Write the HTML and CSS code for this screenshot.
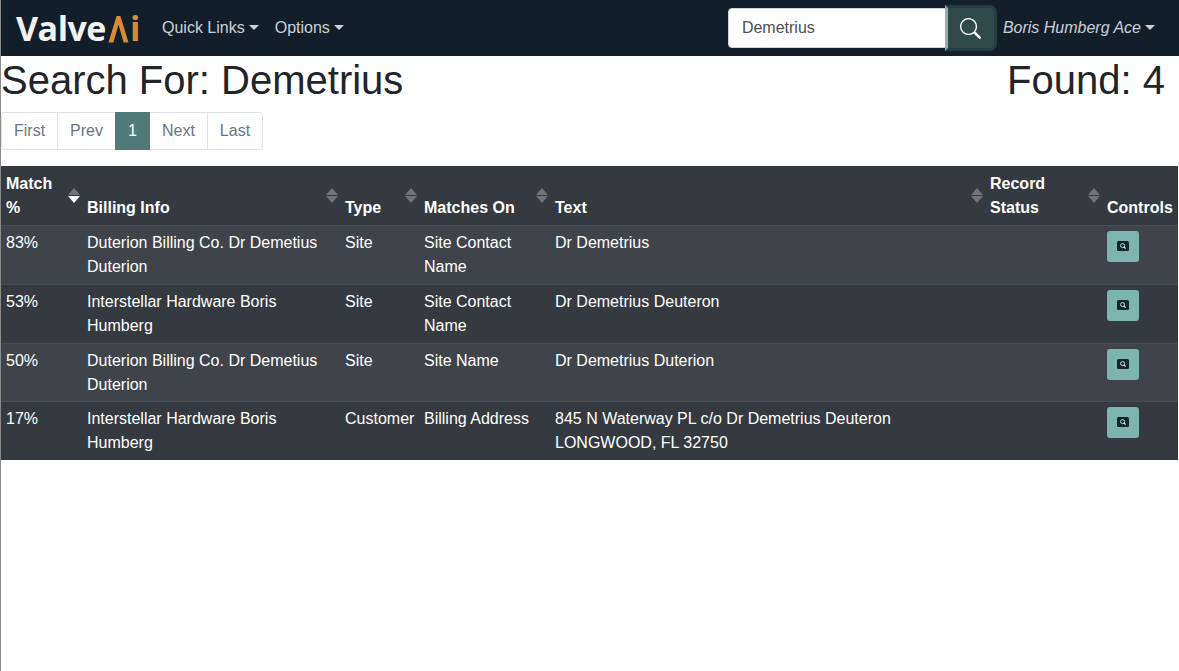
FILE: index.html
```html
<!DOCTYPE html>
<html lang="en">
<head>
<meta charset="utf-8">
<title>Search</title>
<link rel="stylesheet" href="styles.css">
</head>
<body>
<nav class="navbar">
  <a class="brand"><span>Valve</span><svg class="brand-a" viewBox="0 0 21 28" width="21" height="28"><path d="M0.5 27.5 L8.6 1 H12.4 L20.5 27.5 H15.6 L10.5 9.5 L5.4 27.5 Z" fill="#d98b35"/></svg><span class="brand-i">i</span></a>
  <a class="nav-link caret">Quick Links</a>
  <a class="nav-link caret">Options</a>
  <form class="search">
    <input class="search-input" type="text" value="Demetrius">
    <button class="search-btn" type="button" aria-label="Search">
      <svg viewBox="0 0 16 16" width="21" height="21" fill="#fff"><path d="M11.742 10.344a6.5 6.5 0 1 0-1.397 1.398h-.001c.03.04.062.078.098.115l3.85 3.85a1 1 0 0 0 1.415-1.414l-3.85-3.85a1.007 1.007 0 0 0-.115-.1zM12 6.5a5.5 5.5 0 1 1-11 0 5.5 5.5 0 0 1 11 0z"/></svg>
    </button>
  </form>
  <a class="nav-link caret user">Boris Humberg Ace</a>
</nav>
<main class="content">
  <div class="title-row">
    <h1>Search For: Demetrius</h1>
    <h1 class="found">Found: 4</h1>
  </div>
  <ul class="pagination">
    <li>First</li>
    <li>Prev</li>
    <li class="active">1</li>
    <li>Next</li>
    <li>Last</li>
  </ul>
  <table class="results">
    <colgroup>
      <col class="c1"><col class="c2"><col class="c3"><col class="c4"><col class="c5"><col class="c6"><col class="c7">
    </colgroup>
    <thead>
      <tr>
        <th class="sort desc">Match %</th>
        <th class="sort">Billing Info</th>
        <th class="sort">Type</th>
        <th class="sort">Matches On</th>
        <th class="sort">Text</th>
        <th class="sort">Record Status</th>
        <th>Controls</th>
      </tr>
    </thead>
    <tbody>
      <tr>
        <td>83%</td><td>Duterion Billing Co. Dr Demetius Duterion</td><td>Site</td><td>Site Contact Name</td><td>Dr Demetrius</td><td></td>
        <td><button class="view" type="button" aria-label="View"><svg viewBox="0 0 12 10" width="12" height="10"><rect width="12" height="10" rx="1.5" fill="#10262b"/><circle cx="5.6" cy="4.6" r="2" fill="none" stroke="#cfe5e2" stroke-width="1"/><path d="M7 6 L8.6 7.6" stroke="#cfe5e2" stroke-width="1.1"/></svg></button></td>
      </tr>
      <tr>
        <td>53%</td><td>Interstellar Hardware Boris Humberg</td><td>Site</td><td>Site Contact Name</td><td>Dr Demetrius Deuteron</td><td></td>
        <td><button class="view" type="button" aria-label="View"><svg viewBox="0 0 12 10" width="12" height="10"><rect width="12" height="10" rx="1.5" fill="#10262b"/><circle cx="5.6" cy="4.6" r="2" fill="none" stroke="#cfe5e2" stroke-width="1"/><path d="M7 6 L8.6 7.6" stroke="#cfe5e2" stroke-width="1.1"/></svg></button></td>
      </tr>
      <tr class="short">
        <td>50%</td><td>Duterion Billing Co. Dr Demetius Duterion</td><td>Site</td><td>Site Name</td><td>Dr Demetrius Duterion</td><td></td>
        <td><button class="view" type="button" aria-label="View"><svg viewBox="0 0 12 10" width="12" height="10"><rect width="12" height="10" rx="1.5" fill="#10262b"/><circle cx="5.6" cy="4.6" r="2" fill="none" stroke="#cfe5e2" stroke-width="1"/><path d="M7 6 L8.6 7.6" stroke="#cfe5e2" stroke-width="1.1"/></svg></button></td>
      </tr>
      <tr>
        <td>17%</td><td>Interstellar Hardware Boris Humberg</td><td>Customer</td><td>Billing Address</td><td>845 N Waterway PL c/o Dr Demetrius Deuteron<br>LONGWOOD, FL 32750</td><td></td>
        <td><button class="view" type="button" aria-label="View"><svg viewBox="0 0 12 10" width="12" height="10"><rect width="12" height="10" rx="1.5" fill="#10262b"/><circle cx="5.6" cy="4.6" r="2" fill="none" stroke="#cfe5e2" stroke-width="1"/><path d="M7 6 L8.6 7.6" stroke="#cfe5e2" stroke-width="1.1"/></svg></button></td>
      </tr>
    </tbody>
  </table>
</main>
</body>
</html>
```
FILE: styles.css
```css
* { box-sizing: border-box; }
html, body { margin: 0; padding: 0; }
body {
  font-family: "Liberation Sans", Arial, sans-serif;
  font-size: 16px;
  line-height: 24px;
  color: #212529;
  background: #fff;
  border-left: 1px solid #8a8a8a;
  min-height: 671px;
}
.navbar {
  display: flex;
  align-items: center;
  height: 56px;
  background: #131e2b;
  padding: 0 16px 0 15px;
}
.brand {
  display: flex;
  align-items: center;
  width: 138px;
  font-family: "Open Sans", sans-serif;
  font-weight: 700;
  font-size: 34px;
  line-height: 40px;
  letter-spacing: -0.5px;
  color: #f2f2f2;
}
.brand-a { margin: 2px 0 0 2px; flex: none; }
.brand-i { color: #d98b35; margin-left: 1px; }
.nav-link { color: rgba(255,255,255,.8); padding: 0 8px; white-space: nowrap; }
.caret::after {
  content: "";
  display: inline-block;
  margin-left: 4px;
  vertical-align: 3px;
  border-top: 5px solid;
  border-left: 5px solid transparent;
  border-right: 5px solid transparent;
}
.search { display: flex; align-items: center; margin-left: auto; }
.search-input {
  width: 218px;
  height: 40px;
  border: 1px solid #ced4da;
  border-radius: 4px 0 0 4px;
  padding: 0 13px;
  font: 16px "Liberation Sans", Arial, sans-serif;
  color: #495057;
}
.search-btn {
  display: flex;
  align-items: center;
  justify-content: center;
  width: 52px;
  height: 46px;
  margin-left: -1px;
  padding: 0;
  background: #2f4a48;
  border: 3px solid #263c3e;
  border-left-color: #8fb0ab;
  border-radius: 0 7px 7px 0;
}
.user { font-style: italic; margin-left: -2px; }
.title-row { display: flex; justify-content: space-between; padding-right: 14px; }
h1 { margin: 0 0 8px; font-size: 40px; line-height: 48px; font-weight: 400; }
.pagination {
  display: flex;
  list-style: none;
  margin: 0 0 16px;
  padding: 0;
}
.pagination li {
  padding: 6px 12px;
  height: 38px;
  color: #6c757d;
  background: #fff;
  border: 1px solid #dee2e6;
  margin-left: -1px;
}
.pagination li:first-child { margin-left: 0; border-radius: 4px 0 0 4px; }
.pagination li:last-child { border-radius: 0 4px 4px 0; }
.pagination .active { background: #4f7a78; border-color: #4f7a78; color: #fff; position: relative; z-index: 1; }
.results {
  width: 1177px;
  table-layout: fixed;
  border-collapse: collapse;
  color: #fff;
  background: #343a40;
}
.c1 { width: 81px; } .c2 { width: 258px; } .c3 { width: 79px; } .c4 { width: 131px; }
.c5 { width: 435px; } .c6 { width: 117px; } .c7 { width: 76px; }
th, td { padding: 5px; text-align: left; vertical-align: top; border-top: 1px solid #454d55; }
th { vertical-align: bottom; font-weight: 700; border-top: 0; border-bottom: 1px solid #454d55; position: relative; height: 59px; }
tbody td { height: 59px; }
tbody .short td { height: 58px; padding-bottom: 4px; }
tbody tr:nth-child(odd) { background: #3f444b; }
.sort::before, .sort::after {
  content: "";
  position: absolute;
  right: 2px;
  border-left: 6px solid transparent;
  border-right: 6px solid transparent;
  opacity: .3;
}
.sort { padding-right: 16px; }
.sort::before { top: 22px; border-bottom: 7px solid #fff; }
.sort::after { top: 30px; border-top: 7px solid #fff; }
.desc::after { opacity: 1; }
.view {
  display: flex;
  align-items: center;
  justify-content: center;
  width: 32px;
  height: 31px;
  padding: 0;
  border: 0;
  border-radius: 3px;
  background: #7cb5ad;
}
```
